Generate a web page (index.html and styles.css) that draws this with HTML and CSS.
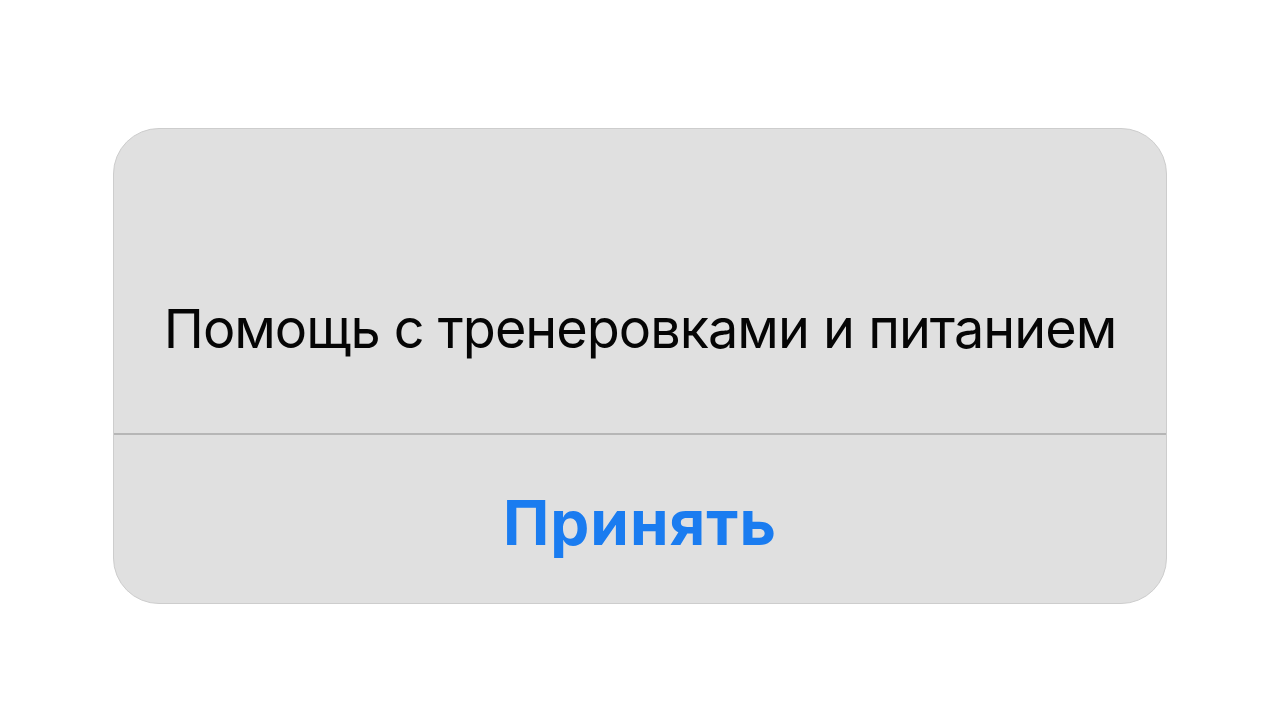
FILE: index.html
```html
<!DOCTYPE html>
<html lang="ru">
  <head>
    <meta charset="UTF-8" />
    <meta name="viewport" content="width=device-width, initial-scale=1.0" />
    <title>Помощь</title>
    <link rel="stylesheet" href="styles.css">
  </head>
  <body>
    <div class="page">
      <div class="alert">
        <div class="alert-message">Помощь с тренеровками и питанием</div>
        <button class="alert-button">Принять</button>
      </div>
    </div>
  </body>
</html>
```

FILE: styles.css
```css
body {
  margin: 0;
  background-color: #fff;
  font-family: Inter, "Open Sans", sans-serif;
}
.page {
  display: flex;
  justify-content: center;
  padding-top: 128px;
}
.alert {
  width: 1054px;
  height: 476px;
  box-sizing: border-box;
  display: flex;
  flex-direction: column;
  background-color: #e0e0e0;
  border: 1px solid #cdcdcd;
  border-radius: 46px;
  overflow: hidden;
}
.alert-message {
  height: 306px;
  display: flex;
  align-items: center;
  justify-content: center;
  padding-top: 94px;
  box-sizing: border-box;
  font-size: 54px;
  letter-spacing: -1px;
  color: #050505;
  border-bottom: 2px solid #b6b6b6;
}
.alert-button {
  flex: 1;
  border: none;
  background: none;
  font-family: Inter, "Open Sans", sans-serif;
  font-size: 62px;
  font-weight: 700;
  letter-spacing: 1px;
  color: #1a7cf0;
  padding: 7px 0 0;
  cursor: pointer;
}
```
